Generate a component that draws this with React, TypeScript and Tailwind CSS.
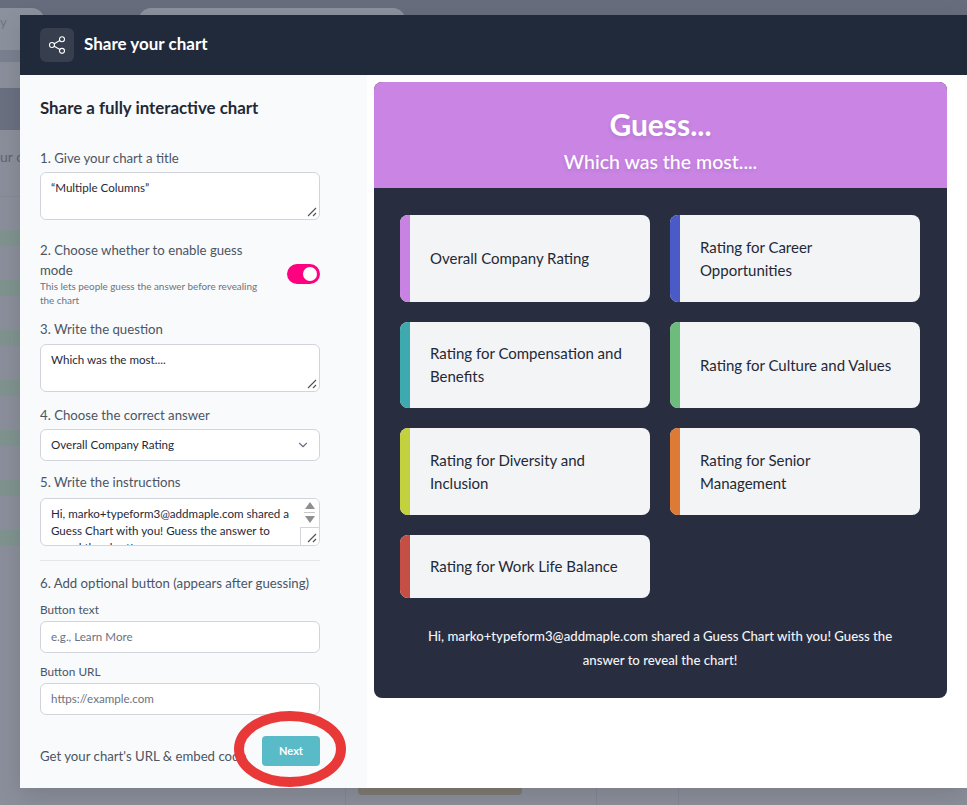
import { ChevronDown, Share2 } from "lucide-react";

const answers = [
  { label: "Overall Company Rating", bar: "bg-[#c882e2]", h: "h-[87px]" },
  { label: "Rating for Career Opportunities", bar: "bg-[#4a5bc7]", h: "h-[87px]" },
  { label: "Rating for Compensation and Benefits", bar: "bg-[#3fa9b0]", h: "h-[86px]" },
  { label: "Rating for Culture and Values", bar: "bg-[#6dbb7d]", h: "h-[86px]" },
  { label: "Rating for Diversity and Inclusion", bar: "bg-[#c4d13f]", h: "h-[87px]" },
  { label: "Rating for Senior Management", bar: "bg-[#dd7a35]", h: "h-[87px]" },
  { label: "Rating for Work Life Balance", bar: "bg-[#c64f45]", h: "h-[63px]" },
];

const stripes = [230, 280, 330, 380, 430, 480, 530];
const gridLines = [345, 596, 678];

// little diagonal grip in the corner of a textarea
function Grip() {
  return (
    <svg className="absolute bottom-[2px] right-[2px]" width="10" height="10" viewBox="0 0 10 10">
      <path d="M1 9 L9 1 M6 9 L9 6" stroke="#555" strokeWidth="1.2" />
    </svg>
  );
}

function TextBox({ text }: { text: string }) {
  return (
    <div className="relative h-[48px] rounded-md border border-[#d1d5db] bg-white px-[10px] py-[6px] text-[11.6px] leading-[17px] text-[#1f2937]">
      {text}
      <Grip />
    </div>
  );
}

function Field({ label, placeholder }: { label: string; placeholder: string }) {
  return (
    <div>
      <div className="text-[11.8px] leading-[16px] text-[#4b5563]">{label}</div>
      <div className="mt-[3px] flex h-[32px] items-center rounded-md border border-[#d1d5db] bg-white px-[10px] text-[11.6px] text-[#6b7280]">
        {placeholder}
      </div>
    </div>
  );
}

export default function App() {
  return (
    <div className="relative h-[805px] w-[967px] overflow-hidden bg-[#8b8f9b] font-['Lato','Liberation_Sans',sans-serif]">
      {/* dimmed page behind the modal */}
      <div className="h-[50px] bg-[#676d7d]" />
      <div className="h-[12px] bg-[#7b8090]" />
      <div className="h-[26px] bg-[#8b8f9b]" />
      <div className="h-[42px] bg-[#6b7080]" />
      <div className="absolute left-0 top-[8px] h-[42px] w-[44px] rounded-r-xl bg-[#8c919e] text-[13px] leading-[28px] text-[#6f7482]">
        y
      </div>
      <div className="absolute left-[139px] top-[8px] h-[40px] w-[266px] rounded-xl bg-[#8c919e]" />
      <div className="absolute left-0 top-[148px] text-[14px] leading-[18px] text-[#5f6472]">ur co</div>
      <div className="absolute left-0 top-[196px] h-px w-[20px] bg-[#858997]" />
      {stripes.map((y) => (
        <div key={y} className="absolute left-0 h-[16px] w-[20px] bg-[#7f938f]" style={{ top: y }} />
      ))}
      <div className="absolute left-[11px] top-[330px] h-[16px] w-px bg-[#8b8f9b]" />
      {gridLines.map((x) => (
        <div key={x} className="absolute top-[788px] h-[17px] w-px bg-[#828694]" style={{ left: x }} />
      ))}
      <div className="absolute left-[358px] top-[788px] h-[7px] w-[164px] rounded-b bg-[#7f7a73]" />

      {/* modal */}
      <div className="absolute left-[20px] top-[15px] flex h-[773px] w-[947px] flex-col bg-white shadow-[0_8px_24px_rgba(0,0,0,0.12)]">
        <header className="flex h-[60px] shrink-0 items-center gap-[10px] bg-[#212a3a] px-[20px]">
          <div className="flex h-[34px] w-[34px] items-center justify-center rounded-md bg-[#373f4e]">
            <Share2 className="h-[20px] w-[20px] text-white" strokeWidth={1.3} />
          </div>
          <h1 className="-mt-[2px] text-[17px] font-bold text-white">Share your chart</h1>
        </header>

        <div className="flex min-h-0 flex-1">
          {/* left form */}
          <div className="flex w-[347px] shrink-0 flex-col bg-[#f9fafc] px-[20px] pt-[22px]">
            <h2 className="whitespace-nowrap text-[16.85px] font-bold leading-[22px] text-[#1f2937]">
              Share a fully interactive chart
            </h2>

            <div className="mt-[29px] w-[280px] text-[13.2px] leading-[20px] text-[#4b5563]">
              <div className="mb-[4px]">1. Give your chart a title</div>
              <TextBox text="“Multiple Columns”" />

              <div className="mt-[20px] flex items-center justify-between">
                <div className="w-[225px]">
                  <div>2. Choose whether to enable guess mode</div>
                  <div className="-mt-px text-[9.9px] leading-[14px] text-[#6b7280]">
                    This lets people guess the answer before revealing the chart
                  </div>
                </div>
                <div className="flex h-[20px] w-[33px] items-center justify-end rounded-full bg-[#ff0080] pr-[3px]">
                  <div className="h-[14px] w-[14px] rounded-full bg-white" />
                </div>
              </div>

              <div className="mb-[5px] mt-[12px]">3. Write the question</div>
              <TextBox text="Which was the most...." />

              <div className="mt-[13px]">4. Choose the correct answer</div>
              <div className="mt-[4px] flex h-[32px] items-center justify-between rounded-md border border-[#d1d5db] bg-white pl-[10px] pr-[9px] text-[11.6px] text-[#1f2937]">
                Overall Company Rating
                <ChevronDown className="h-[14px] w-[14px] text-[#6b7280]" />
              </div>

              <div className="mt-[11px]">5. Write the instructions</div>
              <div className="relative mt-[6px] h-[48px] overflow-hidden rounded-md border border-[#d1d5db] bg-white pl-[10px] pr-[20px] pt-[6px] text-[11.6px] leading-[17px] text-[#1f2937]">
                Hi, marko+typeform3@addmaple.com shared a Guess Chart with you! Guess the answer to reveal the chart!
                <div className="absolute right-0 top-0 flex h-[46px] w-[19px] flex-col items-center bg-white pt-[3px]">
                  <div className="h-0 w-0 border-x-[5px] border-b-[7px] border-x-transparent border-b-[#8f8f8f]" />
                  <div className="my-[3px] h-px w-[11px] bg-[#c8c8c8]" />
                  <div className="h-0 w-0 border-x-[5px] border-t-[7px] border-x-transparent border-t-[#8f8f8f]" />
                </div>
                <div className="absolute bottom-0 right-0 h-[18px] w-[19px] border-l border-t border-[#d1d5db] bg-white">
                  <Grip />
                </div>
              </div>

              <div className="mt-[14px] whitespace-nowrap border-t border-[#e5e7eb] pt-[12px]">
                6. Add optional button (appears after guessing)
              </div>

              <div className="mt-[9px] flex flex-col gap-[11px]">
                <Field label="Button text" placeholder="e.g., Learn More" />
                <Field label="Button URL" placeholder="https://example.com" />
              </div>

              <div className="mt-[21px] flex items-center justify-between">
                <span className="mt-[10px] whitespace-nowrap">Get your chart's URL &amp; embed code</span>
                <button className="h-[30px] w-[58px] rounded bg-[#59bac8] text-[11px] font-bold text-white">Next</button>
              </div>
            </div>
          </div>

          {/* chart preview */}
          <div className="flex-1 pl-[7px] pr-[20px] pt-[7px]">
            <div className="overflow-hidden rounded-lg bg-[#282e40]">
              <div className="flex h-[106px] flex-col items-center bg-[#c984e4] pt-[21px] text-white [text-shadow:0_2px_4px_rgba(0,0,0,0.1)]">
                <div className="text-[30px] font-bold leading-[42px]">Guess...</div>
                <div className="mt-[2px] text-[19.5px] font-medium leading-[30px]">Which was the most....</div>
              </div>
              <div className="pb-[26px] pl-[26px] pr-[27px] pt-[27px]">
                <div className="grid grid-cols-2 items-start gap-x-[20px] gap-y-[20px]">
                  {answers.map((a) => (
                    <div key={a.label} className={`flex ${a.h} overflow-hidden rounded-lg bg-[#f3f4f6]`}>
                      <div className={`w-[10px] shrink-0 ${a.bar}`} />
                      <div className="flex items-center pl-[20px] pr-[20px] text-[15px] leading-[23px] text-[#1f2937]">
                        {a.label}
                      </div>
                    </div>
                  ))}
                </div>
                <p className="mx-auto mt-[26px] w-[490px] text-center text-[13.2px] font-medium leading-[24px] text-[#f3f4f6]">
                  Hi, marko+typeform3@addmaple.com shared a Guess Chart with you! Guess the answer to reveal the chart!
                </p>
              </div>
            </div>
          </div>
        </div>
      </div>

      {/* red marker circle drawn over the screenshot */}
      <svg className="absolute left-[230px] top-[708px]" width="120" height="84" viewBox="0 0 120 84">
        <ellipse cx="60" cy="41" rx="51" ry="33" fill="none" stroke="#e93838" strokeWidth="10" />
      </svg>
    </div>
  );
}
